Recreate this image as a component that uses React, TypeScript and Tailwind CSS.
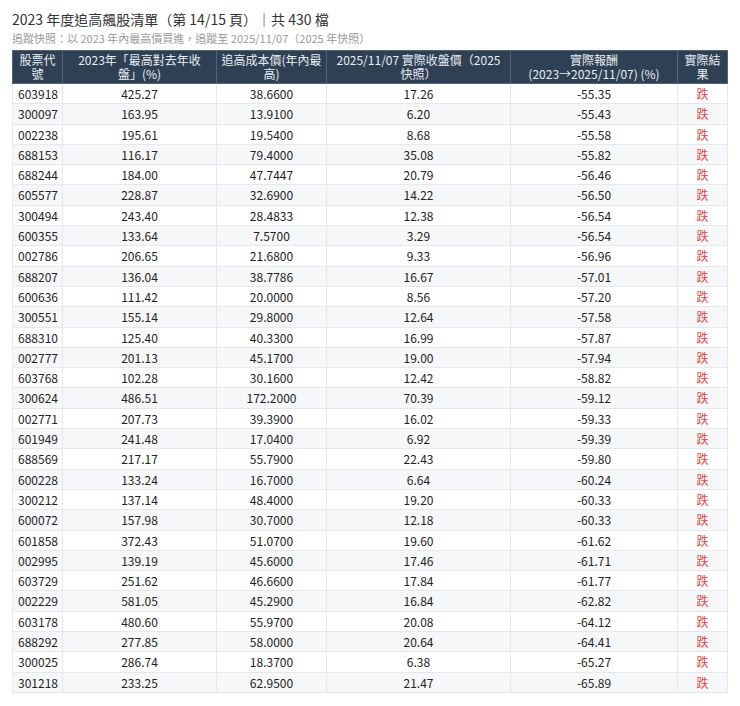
const rows: [string, string, string, string, string][] = [
  ["603918", "425.27", "38.6600", "17.26", "-55.35"],
  ["300097", "163.95", "13.9100", "6.20", "-55.43"],
  ["002238", "195.61", "19.5400", "8.68", "-55.58"],
  ["688153", "116.17", "79.4000", "35.08", "-55.82"],
  ["688244", "184.00", "47.7447", "20.79", "-56.46"],
  ["605577", "228.87", "32.6900", "14.22", "-56.50"],
  ["300494", "243.40", "28.4833", "12.38", "-56.54"],
  ["600355", "133.64", "7.5700", "3.29", "-56.54"],
  ["002786", "206.65", "21.6800", "9.33", "-56.96"],
  ["688207", "136.04", "38.7786", "16.67", "-57.01"],
  ["600636", "111.42", "20.0000", "8.56", "-57.20"],
  ["300551", "155.14", "29.8000", "12.64", "-57.58"],
  ["688310", "125.40", "40.3300", "16.99", "-57.87"],
  ["002777", "201.13", "45.1700", "19.00", "-57.94"],
  ["603768", "102.28", "30.1600", "12.42", "-58.82"],
  ["300624", "486.51", "172.2000", "70.39", "-59.12"],
  ["002771", "207.73", "39.3900", "16.02", "-59.33"],
  ["601949", "241.48", "17.0400", "6.92", "-59.39"],
  ["688569", "217.17", "55.7900", "22.43", "-59.80"],
  ["600228", "133.24", "16.7000", "6.64", "-60.24"],
  ["300212", "137.14", "48.4000", "19.20", "-60.33"],
  ["600072", "157.98", "30.7000", "12.18", "-60.33"],
  ["601858", "372.43", "51.0700", "19.60", "-61.62"],
  ["002995", "139.19", "45.6000", "17.46", "-61.71"],
  ["603729", "251.62", "46.6600", "17.84", "-61.77"],
  ["002229", "581.05", "45.2900", "16.84", "-62.82"],
  ["603178", "480.60", "55.9700", "20.08", "-64.12"],
  ["688292", "277.85", "58.0000", "20.64", "-64.41"],
  ["300025", "286.74", "18.3700", "6.38", "-65.27"],
  ["301218", "233.25", "62.9500", "21.47", "-65.89"],
];

// header cells: text and horizontal padding (col 2 wraps after 收)
const headers: [string, string][] = [
  ["股票代號", "px-[4px]"],
  ["2023年「最高對去年收盤」(%)", "px-[9px]"],
  ["追高成本價(年內最高)", "px-[4px]"],
  ["2025/11/07 實際收盤價（2025 快照）", "px-[4px]"],
  ["實際報酬 (2023→2025/11/07) (%)", "px-[4px]"],
  ["實際結果", "px-[4px]"],
];

export default function App() {
  return (
    <div className="min-h-[706px] bg-white px-3 pt-[8px] font-['Noto_Sans_CJK_TC','Noto_Sans',sans-serif]">
      <h1 className="text-[14px] leading-[22px] text-[#333]">
        2023 年度追高飆股清單（第 14/15 頁）｜共 430 檔
      </h1>
      <p className="text-[11px] leading-[16px] text-[#999]">
        追蹤快照：以 2023 年內最高價買進，追蹤至 2025/11/07（2025 年快照）
      </p>
      <table className="mt-[4px] w-[715px] table-fixed border-collapse text-[12px]">
        <colgroup>
          <col className="w-[50px]" />
          <col className="w-[154px]" />
          <col className="w-[110px]" />
          <col className="w-[184px]" />
          <col className="w-[167px]" />
          <col className="w-[50px]" />
        </colgroup>
        <thead>
          <tr className="bg-[#2e4053] text-[#e9eef3]">
            {headers.map(([h, pad]) => (
              <th
                key={h}
                className={`border border-[#52647a] ${pad} py-[2px] text-center font-normal leading-[14px] h-[33px]`}
              >
                {h}
              </th>
            ))}
          </tr>
        </thead>
        <tbody className="text-[#222]">
          {rows.map((r, i) => (
            <tr key={r[0]} className={i % 2 === 1 ? "bg-[#f6f7f9]" : "bg-white"}>
              <td className="border border-[#e6e8eb] px-[5px] leading-[19.3px] text-left">{r[0]}</td>
              <td className="border border-[#e6e8eb] px-[5px] leading-[19.3px] text-center">{r[1]}</td>
              <td className="border border-[#e6e8eb] px-[5px] leading-[19.3px] text-center">{r[2]}</td>
              <td className="border border-[#e6e8eb] px-[5px] leading-[19.3px] text-center">{r[3]}</td>
              <td className="border border-[#e6e8eb] px-[5px] leading-[19.3px] text-center">{r[4]}</td>
              <td className="border border-[#e6e8eb] px-[5px] leading-[19.3px] text-center text-[#e0483d]">跌</td>
            </tr>
          ))}
        </tbody>
      </table>
    </div>
  );
}
